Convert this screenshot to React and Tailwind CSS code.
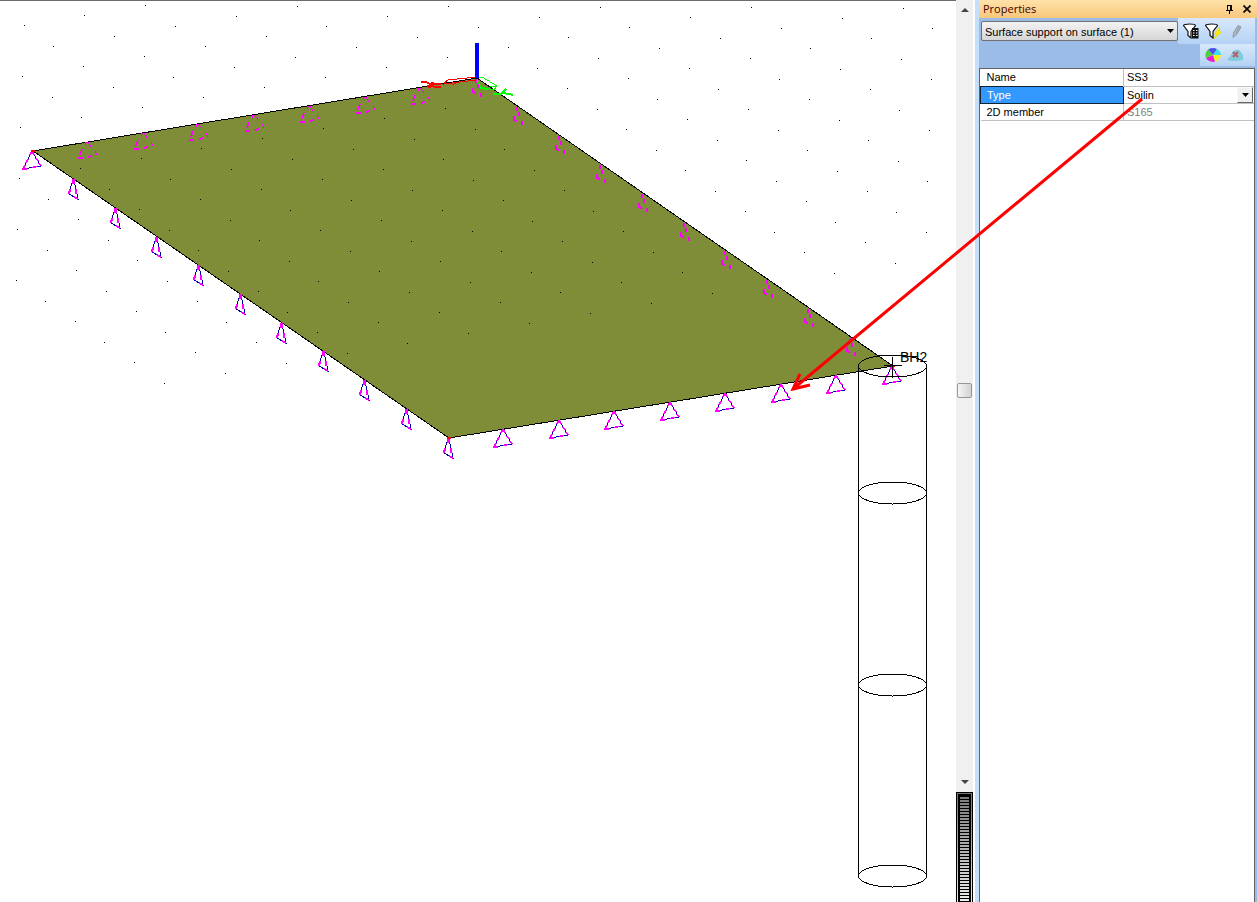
import React from 'react';

// Corners of the slab
const WEST = [33, 151];
const NORTH = [477, 78];
const EAST = [893, 366];
const SOUTH = [449, 438];

const spread = (from, to, segments, first, last) => {
  const points = [];
  for (let i = first; i <= last; i++) {
    points.push([
      Math.floor(from[0] + ((to[0] - from[0]) * i) / segments),
      Math.floor(from[1] + ((to[1] - from[1]) * i) / segments),
    ]);
  }
  return points;
};

const gridDots = () => {
  const dots = [];
  for (let row = -40; row <= 14; row++) {
    for (let col = -30; col <= 9; col++) {
      const x = Math.floor(297.3 - 60.9 * col + 29.65 * row);
      const y = Math.floor(6.3 + 10 * col + 20.5 * row);
      if (x > 0 && x < 955 && y > 1 && y < 400) dots.push([x, y]);
    }
  }
  return dots;
};

const frontSupports = [WEST, ...spread(SOUTH, EAST, 8, 1, 8)];
const sideSupports = spread(WEST, SOUTH, 10, 1, 10);
const backSupports = spread(WEST, NORTH, 8, 1, 7);
const hiddenSupports = spread(NORTH, EAST, 10, 0, 9);
const soilLayers = [366, 493, 685, 876];

const at = ([x, y]) => `translate(${x - 1} ${y})`;

const ModelView = () => (
  <svg className="block h-full w-full" shapeRendering="crispEdges" fill="none" aria-label="3D model view">
    <polygon
      points={[WEST, NORTH, EAST, SOUTH].map((p) => p.join(',')).join(' ')}
      fill="#808d38"
      stroke="#000"
    />

    {gridDots().map(([x, y]) => (
      <rect key={`${x}-${y}`} x={x} y={y} width="1" height="1" fill="#000" />
    ))}

    {/* Line supports */}
    {frontSupports.map((p) => (
      <g key={`f${p}`} transform={at(p)}>
        <path d="M0 0L-9 18L9 15Z" stroke="#00a" />
        <path
          d="M0 0l-2 4M-4 8l-2 4M-7 14l-2 4h4M0 16.500l5 -1M0 0l2 4M4 7l2 3M7 12l2 3"
          stroke="#f0f"
          strokeWidth="1.500"
        />
      </g>
    ))}
    {sideSupports.map((p) => (
      <g key={`s${p}`} transform={at(p)}>
        <path d="M0 0L-4 15L5 20L1 1" stroke="#00a" />
        <path d="M0 0v5" stroke="#f0f" strokeWidth="3" />
        <path d="M-3 10l-1 5M3 10v5M1 18l4 2" stroke="#f0f" strokeWidth="2" />
      </g>
    ))}
    {backSupports.map((p) => (
      <g key={`b${p}`} transform={at(p)} stroke="#f0f">
        <path d="M-2 1h4M-1 1l-1 3M1 1l3 5M8 10l2 4" />
        <path d="M-5 8l-2 6" strokeWidth="1.500" />
        <path d="M-9 17h5M1 16l4 -1" strokeWidth="2" />
      </g>
    ))}
    {hiddenSupports.map((p) => (
      <path
        key={`h${p}`}
        transform={at(p)}
        d="M0 1v4M2 6v4M-3 10v5M-2 14l2 2M5 15v4"
        stroke="#f0f"
        strokeWidth="2"
      />
    ))}
    {[WEST, SOUTH, EAST].map((p) => (
      <rect key={`c${p}`} x={p[0] - 2} y={p[1] - 1} width="4" height="2" fill="#f00" />
    ))}

    {/* Coordinate axes */}
    <path d="M476 77L448 80L444 84L476 80M448 80l-4 3M452 85l6 -3" stroke="#f00" />
    <path d="M421 82h5l4 2h11M429 88l4 -6M427 86l14 1" stroke="#f00" strokeWidth="2" />
    <path d="M478 77h4l15 9l-3 4l-13 -3l-4 -7M490 86h7" stroke="#0f0" />
    <path d="M493 94h6l5 -1l9 2M501 94l5 -5M480 88l8 1" stroke="#0f0" strokeWidth="2" />
    <rect x="475" y="43" width="4" height="35" fill="#00f" />

    {/* Borehole */}
    <g stroke="#000">
      {soilLayers.map((y) => (
        <ellipse key={y} cx="892.500" cy={y} rx="34" ry="11" />
      ))}
      <path d="M858.500 366V876M926.500 366V876M892.500 357V377M884 365.500H902" />
    </g>
    <text x="900" y="362" fill="#000" fontSize="14" fontFamily="Liberation Sans, Arial, sans-serif">
      BH2
    </text>
  </svg>
);

const ScrollColumn = () => (
  <div className="flex w-[19px] shrink-0 flex-col border-r-2 border-white bg-[#f0f0f0] pt-[6px]">
    <button type="button" aria-label="Scroll up" className="flex h-2 items-center justify-center">
      <svg width="8" height="4" viewBox="0 0 8 4"><path d="M0 4L4 0L8 4Z" fill="#444" /></svg>
    </button>
    <div className="flex flex-1 flex-col items-center">
      <div className="flex-[370]" />
      <button
        type="button"
        aria-label="Scroll thumb"
        className="h-[15px] w-[15px] rounded-xs border border-[#979797] bg-linear-to-r from-[#f6f6f6] to-[#d2d2d2]"
      />
      <div className="flex-[380]" />
    </div>
    <button type="button" aria-label="Scroll down" className="flex h-4 justify-center pt-1">
      <svg width="8" height="4" viewBox="0 0 8 4"><path d="M0 0L4 4L8 0Z" fill="#444" /></svg>
    </button>
    <div className="h-[110px] w-[17px] border border-b-0 border-black bg-linear-to-b from-[#777] to-[#eee] px-px pt-px">
      <div className="h-full border-x-2 border-t-2 border-black bg-[repeating-linear-gradient(to_bottom,#000_0px,#000_1px,transparent_1px,transparent_3px)]" />
    </div>
  </div>
);

const Funnel = () => (
  <path d="M.5 2.500C.5 .5 12.500 .5 12.500 2.500L8 8.500V15L5 12.500V8.500Z" fill="#fff" stroke="#111" strokeWidth="1.200" />
);

const toolButton = 'flex h-5 w-[23px] items-center justify-center';

const PropertiesPanel = () => (
  <aside className="flex w-[278px] shrink-0 flex-col bg-[#9abce6]">
    <header className="flex h-[18px] items-center bg-linear-to-b from-[#ffe2a8] to-[#f8c77c] pr-px pl-1 text-[#400]">
      <h2 className="flex-1 font-['Open_Sans',sans-serif] text-[11px] leading-4">Properties</h2>
      <button type="button" aria-label="Pin" className="flex w-4 justify-center">
        <svg width="8" height="9" viewBox="0 0 8 9" fill="none" stroke="#000" shapeRendering="crispEdges">
          <path d="M1 .5H6M1.500 0V5M0 5.500H7M3.500 5V9" />
          <path d="M5 0V5" strokeWidth="2" />
        </svg>
      </button>
      <button type="button" aria-label="Close" className="flex w-[18px] justify-center">
        <svg width="8" height="8" viewBox="0 0 8 8"><path d="M.5 .5L7.500 7.500M7.500 .5L.5 7.500" stroke="#000" strokeWidth="1.700" /></svg>
      </button>
    </header>

    <div className="flex h-[26px] items-center pl-[2px]">
      <div className="relative flex-1">
        <select
          aria-label="Selection"
          className="block h-5 w-full appearance-none rounded-xs border border-[#707070] bg-linear-to-b from-[#f3f3f3] to-[#d6d6d6] pt-[2px] pl-[3px] text-[11px] leading-4 text-black"
        >
          <option>Surface support on surface (1)</option>
        </select>
        <svg className="pointer-events-none absolute top-2 right-1" width="7" height="4" viewBox="0 0 7 4"><path d="M0 0H7L3.500 4Z" /></svg>
      </div>
      <div className="mr-[2px] flex h-full w-[77px] items-center bg-linear-to-b from-[#d8e8fb] to-[#b4d2f5] pl-px">
        <button type="button" aria-label="Filter by property" className={toolButton}>
          <svg width="16" height="16" viewBox="0 0 16 16">
            <Funnel />
            <path d="M9 5H15.500V15.500H9Z" fill="#111" />
            <path d="M10 7.500h1.500M13 7.500h1.500M10 10h1.500M13 10h1.500M10 12.500h1.500M13 12.500h1.500" stroke="#fff" />
          </svg>
        </button>
        <button type="button" aria-label="Quick filter" className={toolButton}>
          <svg width="17" height="16" viewBox="0 0 17 16">
            <Funnel />
            <path d="M15 4L9.500 10.500H12L9 15.500L16.500 9H13.500Z" fill="#fff200" stroke="#f0d800" strokeWidth=".8" />
          </svg>
        </button>
        <button type="button" aria-label="Edit" className={toolButton}>
          <svg width="12" height="15" viewBox="0 0 12 15">
            <path d="M2 13.500L2.500 9L7 1.500L10 3L6 10Z" fill="#b4bcc6" stroke="#8e98a3" />
            <path d="M5 9L8.500 2.500" stroke="#8e98a3" />
          </svg>
        </button>
      </div>
    </div>

    <div className="flex h-6 justify-end">
      <div className="mr-[2px] flex h-[22px] w-[55px] items-center bg-linear-to-b from-[#d8e8fb] to-[#b4d2f5] pl-px">
        <button type="button" aria-label="Colours" className={toolButton}>
          <svg width="16" height="14" viewBox="0 0 16 14">
            <path d="M8 7L3 1.500Q8 -1 12 1Z" fill="#4a50e8" />
            <path d="M8 7L12 1Q16 3 16 7Z" fill="#3ddcf0" />
            <path d="M8 7H16Q15 12 10 14Z" fill="#f7ee20" />
            <path d="M8 7L10 14Q3 14 1 10Z" fill="#e81ad8" />
            <path d="M8 7L1 10Q-1 5 3 1.500Z" fill="#4ccf40" />
          </svg>
        </button>
        <button type="button" aria-label="Clear" className={toolButton}>
          <svg width="17" height="13" viewBox="0 0 17 13">
            <path d="M0 11Q3 8 5 4Q7 0 12 1Q17 5 16 11Q8 13 0 11Z" fill="#80cbdc" />
            <path d="M6 3L11 8M11 3L6 8" stroke="#bd5a6c" strokeWidth="2" />
          </svg>
        </button>
      </div>
    </div>

    <div className="mr-[2px] flex-1 border-t border-r border-l border-[#606468] bg-white">
      <table className="w-full table-fixed border-collapse text-[11px] leading-4 text-black">
        <colgroup>
          <col className="w-[143px]" />
          <col />
        </colgroup>
        <tbody>
          <tr className="h-[17px] border-b border-[#c0c0c0]">
            <th scope="row" className="border-r border-[#c0c0c0] p-0 pl-[6px] text-left font-normal">Name</th>
            <td className="p-0">
              <input aria-label="Name" defaultValue="SS3" className="block h-4 w-full pl-[3px]" />
            </td>
          </tr>
          <tr className="h-[17px] border-b border-[#c0c0c0]">
            <th scope="row" className="border border-[#123] bg-[#3399ff] p-0 pl-[6px] text-left font-normal text-white">Type</th>
            <td className="p-0">
              <div className="relative">
                <select aria-label="Type" className="block h-4 w-full appearance-none pl-[3px]">
                  <option>Soilin</option>
                </select>
                <span className="pointer-events-none absolute top-0 right-px flex h-4 w-4 items-center justify-center border border-[#f8f8f8] border-r-[#666] border-b-[#666] bg-[#f0f0f0]">
                  <svg width="7" height="4" viewBox="0 0 7 4"><path d="M0 0H7L3.500 4Z" /></svg>
                </span>
              </div>
            </td>
          </tr>
          <tr className="h-[17px] border-b border-[#c0c0c0]">
            <th scope="row" className="border-r border-[#c0c0c0] p-0 pl-[6px] text-left font-normal">2D member</th>
            <td className="p-0 pl-[3px] text-[#808080]">S165</td>
          </tr>
        </tbody>
      </table>
    </div>
  </aside>
);

const App = () => (
  <div className="relative flex h-screen overflow-hidden bg-white font-['Liberation_Sans',Arial,sans-serif]">
    <div className="flex min-w-0 flex-1">
      <main className="relative min-w-0 flex-1">
        <ModelView />
        <div className="absolute inset-x-0 top-0 h-px bg-[#6b6b6b]" />
      </main>
      <ScrollColumn />
    </div>
    <div className="w-1 shrink-0 bg-[#c5dffa]" />
    <PropertiesPanel />

    {/* Callout from the Type value to the supports */}
    <svg className="pointer-events-none absolute inset-0 h-full w-full" fill="none" stroke="#f00" strokeWidth="3">
      <path d="M1142 99L793 389M800 374L793 389L810 385" />
    </svg>
  </div>
);

export default App;
